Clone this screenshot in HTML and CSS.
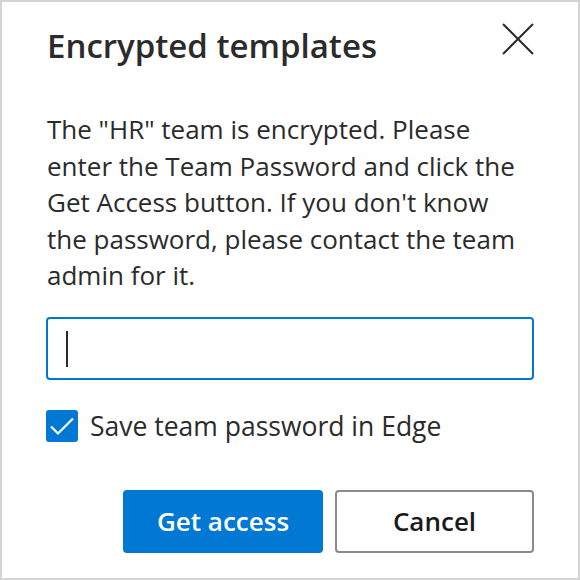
FILE: index.html
```
<!DOCTYPE html>
<html lang="en">
<head>
<meta charset="utf-8">
<title>Encrypted templates</title>
<link rel="stylesheet" href="styles.css">
</head>
<body>
<div class="dialog">
  <div class="header">
    <h1 class="title">Encrypted templates</h1>
    <button class="close" aria-label="Close">
      <svg width="32" height="32" viewBox="0 0 32 32"><path d="M1 1 L31 31 M31 1 L1 31" stroke="#2b2b2b" stroke-width="2" fill="none"/></svg>
    </button>
  </div>
  <p class="message">The "HR" team is encrypted. Please<br>enter the Team Password and click the<br>Get Access button. If you don't know<br>the password, please contact the team<br>admin for it.</p>
  <div class="field"><span class="caret"></span></div>
  <label class="check">
    <span class="box">
      <svg width="32" height="32" viewBox="0 0 32 32"><path d="M5 16.5 L12 23.5 L27 8.5" stroke="#fff" stroke-width="2.2" fill="none"/></svg>
    </span>
    <span class="check-label">Save team password in Edge</span>
  </label>
  <div class="actions">
    <button class="btn primary">Get access</button>
    <button class="btn secondary">Cancel</button>
  </div>
</div>
</body>
</html>
```
FILE: styles.css
```
* { box-sizing: border-box; }
html, body { margin: 0; padding: 0; background: #fff; }
body { font-family: "Open Sans", "Noto Sans", sans-serif; color: #2b2b2b; }
.dialog {
  width: 580px;
  height: 580px;
  border: 2px solid #d4d4d4;
  padding: 0 44px;
  display: flex;
  flex-direction: column;
}
.header {
  display: flex;
  justify-content: space-between;
  align-items: flex-start;
  height: 88px;
}
.title {
  margin: 22px 0 0 1px;
  font-size: 33px;
  font-weight: 600;
  line-height: 44px;
  color: #2b2b2b;
}
.close {
  margin: 21px 0 0 0;
  padding: 0;
  border: 0;
  background: none;
  width: 32px;
  height: 32px;
  display: block;
}
.close svg { display: block; }
.message {
  margin: 21px 0 0 1px;
  font-size: 26px;
  line-height: 36.5px;
  white-space: nowrap;
}
.field {
  margin-top: 23px;
  height: 63px;
  border: 2px solid #0078d4;
  border-radius: 4px;
  padding: 12px 0 0 18px;
}
.caret {
  display: block;
  width: 2px;
  height: 36px;
  background: #2b2b2b;
}
.check {
  margin-top: 30px;
  display: flex;
  align-items: center;
  gap: 12px;
}
.box {
  width: 32px;
  height: 32px;
  border-radius: 3px;
  background: #0078d4;
  display: block;
}
.box svg { display: block; }
.check-label {
  font-size: 26.5px;
  line-height: 32px;
}
.actions {
  margin-top: 48px;
  display: flex;
  justify-content: flex-end;
  gap: 12px;
}
.btn {
  height: 63px;
  border-radius: 4px;
  font-family: "Open Sans", "Noto Sans", sans-serif;
  font-size: 26px;
  font-weight: 600;
  padding: 0;
}
.primary {
  width: 200px;
  background: #0078d4;
  color: #fff;
  border: 0;
}
.secondary {
  width: 199px;
  background: #fff;
  color: #1a1a1a;
  border: 2px solid #8a8a8a;
}
```
